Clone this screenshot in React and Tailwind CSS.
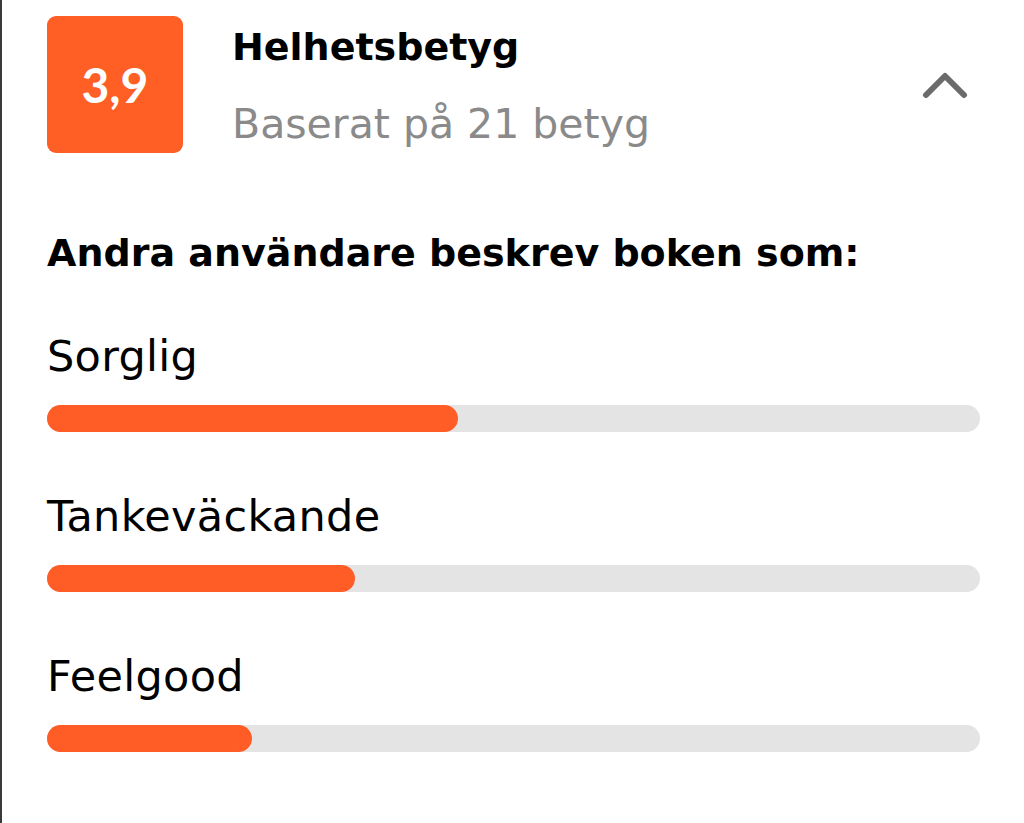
import React from "react";

const rows = [
  { label: "Sorglig", w: 411 },
  { label: "Tankeväckande", w: 308 },
  { label: "Feelgood", w: 205 },
];

export default function App() {
  return (
    <div
      className="w-[1024px] h-[823px] bg-white border-l-2 border-[#3a3a3a] overflow-hidden"
      style={{ fontFamily: "'DejaVu Sans', 'Noto Sans', sans-serif" }}
    >
      <div className="pl-[45px] pr-[42px] pt-[16px]">
        <div className="flex items-start">
          <div
            className="w-[136px] h-[137px] rounded-[9px] bg-[#ff5e25] flex items-center justify-center text-white font-bold text-[48px] leading-none"
            style={{ fontFamily: "Lato, 'Noto Sans', sans-serif" }}
          >
            3,9
          </div>
          <div className="ml-[49px] flex-1 pt-[7px]">
            <div className="text-[38px] font-bold text-black leading-[48px]">Helhetsbetyg</div>
            <div className="text-[41px] text-[#8a8a8a] leading-[48px] mt-[29px]">Baserat på 21 betyg</div>
          </div>
          <div className="mt-[55px] mr-[14px]">
            <svg width="46" height="30" viewBox="0 0 46 30" fill="none">
              <path d="M4 24 L23 5 L42 24" stroke="#6b6b6b" strokeWidth="6" strokeLinecap="round" strokeLinejoin="round" />
            </svg>
          </div>
        </div>
        <div className="mt-[76px] text-[38px] font-bold text-black leading-[48px]">
          Andra användare beskrev boken som:
        </div>
        <div className="mt-[54px] flex flex-col">
          {rows.map((r) => (
            <div key={r.label} className="mb-[59px]">
              <div className="text-[43px] text-black leading-[50px] tracking-[0.3px]">{r.label}</div>
              <div className="mt-[24px] h-[27px] w-[933px] rounded-full bg-[#e4e4e4]">
                <div className="h-full rounded-full bg-[#ff5c26]" style={{ width: r.w }} />
              </div>
            </div>
          ))}
        </div>
      </div>
    </div>
  );
}
